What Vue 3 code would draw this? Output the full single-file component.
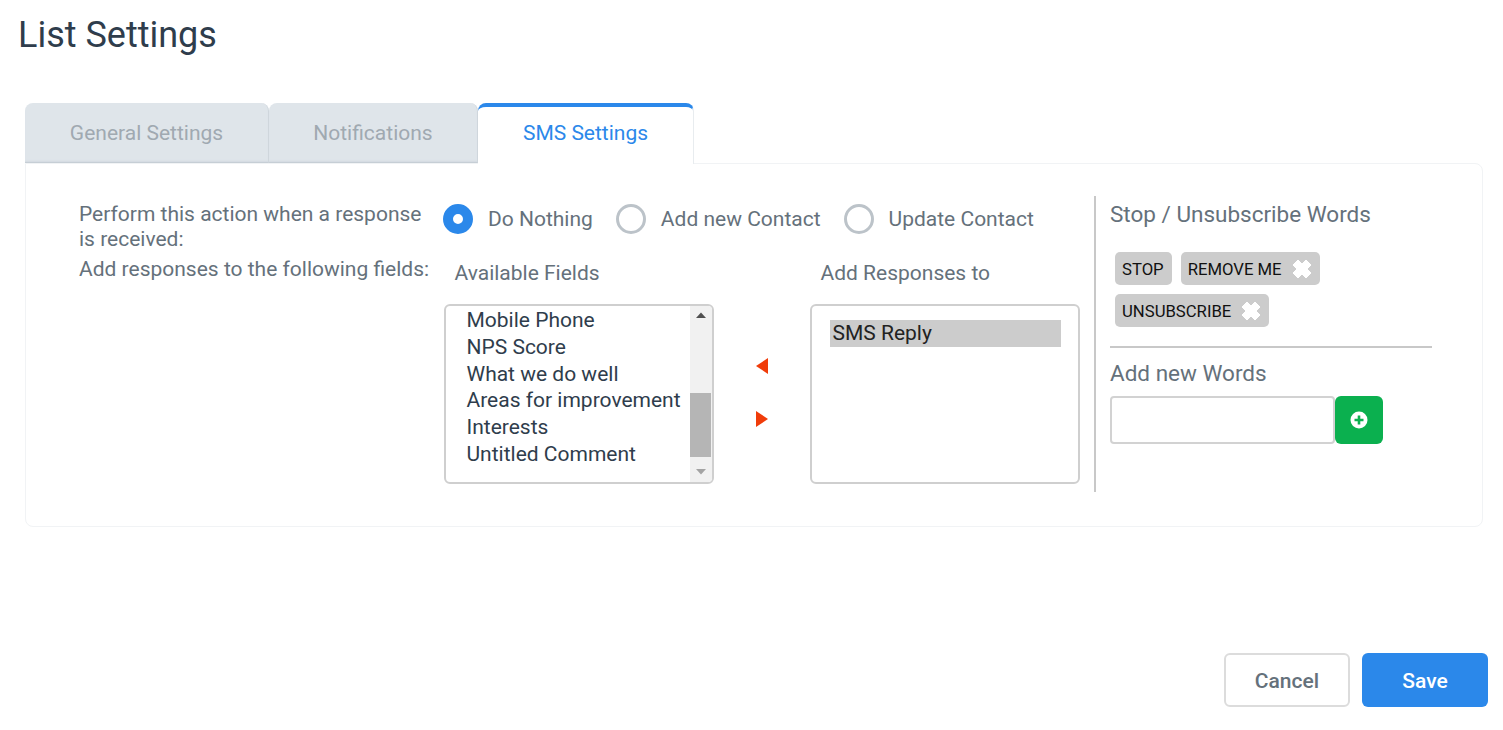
<script setup>
const tabs = [
  { label: 'General Settings', width: 244 },
  { label: 'Notifications', width: 209 },
  { label: 'SMS Settings', width: 216, active: true }
]
const radios = [
  { label: 'Do Nothing', checked: true },
  { label: 'Add new Contact' },
  { label: 'Update Contact' }
]
const fields = ['Mobile Phone', 'NPS Score', 'What we do well', 'Areas for improvement', 'Interests', 'Untitled Comment']
</script>

<template>
  <div class="page">
    <h1 class="title">List Settings</h1>
    <div class="tabs">
      <div
        v-for="t in tabs"
        :key="t.label"
        class="tab"
        :class="{ active: t.active }"
        :style="{ width: t.width + 'px' }"
      >{{ t.label }}</div>
    </div>
    <div class="card">
      <div class="main">
        <div class="labels">
          <p class="perform">Perform this action when a response<br>is received:</p>
          <p class="addresp">Add responses to the following fields:</p>
        </div>
        <div class="controls">
          <div class="radios">
            <label v-for="r in radios" :key="r.label" class="radio">
              <span class="dot" :class="{ on: r.checked }"></span>
              <span>{{ r.label }}</span>
            </label>
          </div>
          <div class="transfer">
            <div class="col">
              <div class="col-title">Available Fields</div>
              <div class="box">
                <div class="items">
                  <div v-for="f in fields" :key="f" class="item">{{ f }}</div>
                </div>
                <div class="scrollbar">
                  <svg class="sb-arrow" width="12" height="8" viewBox="0 0 12 8"><path d="M1 7L6 1.5 11 7z" fill="#505050"/></svg>
                  <div class="sb-track"><div class="sb-thumb"></div></div>
                  <svg class="sb-arrow" width="12" height="8" viewBox="0 0 12 8"><path d="M1 1L6 6.5 11 1z" fill="#a3a3a3"/></svg>
                </div>
              </div>
            </div>
            <div class="arrows">
              <svg width="14" height="18" viewBox="0 0 14 18"><path d="M13 1V17L1 9z" fill="#f03c0a"/></svg>
              <svg width="14" height="18" viewBox="0 0 14 18"><path d="M1 1V17L13 9z" fill="#f03c0a"/></svg>
            </div>
            <div class="col">
              <div class="col-title second">Add Responses to</div>
              <div class="box box2">
                <div class="selected">SMS Reply</div>
              </div>
            </div>
          </div>
        </div>
      </div>
      <div class="side">
        <div class="side-title">Stop / Unsubscribe Words</div>
        <div class="chips">
          <span class="chip">STOP</span>
          <span class="chip">REMOVE ME
            <svg class="x" width="20" height="20" viewBox="0 0 20 20"><path d="M6 1L10 5 14 1 19 6 15 10 19 14 14 19 10 15 6 19 1 14 5 10 1 6z" fill="#fff" stroke="#fff" stroke-linejoin="round"/></svg>
          </span>
          <span class="chip">UNSUBSCRIBE
            <svg class="x" width="20" height="20" viewBox="0 0 20 20"><path d="M6 1L10 5 14 1 19 6 15 10 19 14 14 19 10 15 6 19 1 14 5 10 1 6z" fill="#fff" stroke="#fff" stroke-linejoin="round"/></svg>
          </span>
        </div>
        <div class="divider"></div>
        <div class="side-sub">Add new Words</div>
        <div class="add">
          <input class="word" type="text">
          <button class="plus" type="button">
            <svg width="18" height="18" viewBox="0 0 18 18"><circle cx="9" cy="9" r="8.5" fill="#fff"/><path d="M9 4.5v9M4.5 9h9" stroke="#0bb04f" stroke-width="2.6"/></svg>
          </button>
        </div>
      </div>
    </div>
    <div class="actions">
      <button class="btn cancel" type="button">Cancel</button>
      <button class="btn save" type="button">Save</button>
    </div>
  </div>
</template>

<style>
html, body { margin: 0; background: #fff; }
</style>

<style scoped>
.page {
  box-sizing: border-box;
  height: 730px;
  width: 1503px;
  overflow: hidden;
  padding: 0 15px 23px 25px;
  display: flex;
  flex-direction: column;
  font-family: Roboto, "Liberation Sans", sans-serif;
  color: #65717b;
}
.title {
  margin: 14px 0 0 -7px;
  font-size: 36px;
  line-height: 42px;
  font-weight: 400;
  color: #2f3d4c;
}
.tabs {
  display: flex;
  margin-top: 47px;
  height: 60px;
}
.tab {
  box-sizing: border-box;
  display: flex;
  align-items: center;
  justify-content: center;
  font-size: 21px;
  color: #a0a9b1;
  background: #dfe5ea;
  border-radius: 8px 8px 0 0;
  border-right: 1px solid #cfd6dc;
  border-bottom: 1px solid #c6ced5;
  box-shadow: inset 0 -2px 2px -1px #d3dae0;
}
.tab.active {
  background: #fff;
  color: #2b88ea;
  border-top: 4px solid #2b88ea;
  border-right: 1px solid #e8ecef;
  border-bottom: 0;
  box-shadow: none;
  padding-bottom: 6px;
  margin-bottom: -1px;
  height: 61px;
  position: relative;
}
.card {
  box-sizing: border-box;
  width: 1458px;
  height: 364px;
  border: 1px solid #f1f3f5;
  border-radius: 0 8px 8px 8px;
  padding: 32px 49px 34px 53px;
  display: flex;
}
.main {
  width: 1015px;
  flex: none;
  display: flex;
}
.labels {
  width: 364px;
  flex: none;
  font-size: 21px;
  line-height: 25px;
  color: #65717b;
}
.labels p { margin: 0; }
.perform { padding-top: 6px; }
.addresp { margin-top: 5px !important; }
.controls { flex: 1; min-width: 0; }
.radios {
  display: flex;
  height: 46px;
  align-items: center;
  font-size: 21px;
}
.radio {
  display: flex;
  align-items: center;
  gap: 15px;
  margin-right: 23px;
}
.dot {
  box-sizing: border-box;
  width: 30px;
  height: 30px;
  border-radius: 50%;
  border: 3px solid #bcc3c9;
  background: #fff;
}
.dot.on {
  border: 10px solid #2b88ea;
}
.transfer {
  display: flex;
  margin-top: 18px;
  margin-left: 1px;
}
.col { width: 270px; flex: none; }
.col-title {
  font-size: 21px;
  line-height: 26px;
  padding-left: 10.5px;
  margin-bottom: 18px;
}
.box {
  box-sizing: border-box;
  height: 180px;
  border: 2px solid #cfcfcf;
  border-radius: 6px;
  display: flex;
  overflow: hidden;
  background: #fff;
}
.items {
  flex: 1;
  padding: 1px 0 0 20.5px;
  font-size: 21px;
  line-height: 26.8px;
  color: #2f3d4c;
  white-space: nowrap;
}
.scrollbar {
  width: 22px;
  background: #f1f1f1;
  display: flex;
  flex-direction: column;
  align-items: center;
  flex: none;
}
.sb-arrow { flex: none; margin: 5px 0 6px; }
.sb-track { flex: 1; width: 100%; padding-top: 68px; box-sizing: border-box; }
.sb-thumb { height: 64px; width: 21px; background: #b5b5b5; }
.arrows {
  width: 96px;
  flex: none;
  display: flex;
  flex-direction: column;
  align-items: center;
  gap: 35px;
  padding-top: 97px;
  box-sizing: border-box;
}
.box2 { padding: 14px 17px 0 18px; display: block; }
.selected {
  background: #ccc;
  height: 27px;
  line-height: 27px;
  font-size: 21px;
  padding-left: 2.5px;
  color: #222;
}
.side {
  flex: 1;
  border-left: 2px solid #c8c8c8;
  padding-left: 13px;
  margin-left: 0;
}
.side > * { margin-left: 1px; }
.side-title {
  font-size: 22.5px;
  line-height: 28px;
  margin-top: 4px;
}
.chips {
  display: flex;
  flex-wrap: wrap;
  gap: 9px;
  margin-top: 24px;
  padding-left: 5px;
}
.chip {
  display: inline-flex;
  align-items: center;
  height: 33px;
  padding: 1px 8px 0 7px;
  box-sizing: border-box;
  gap: 10px;
  background: #ccc;
  border-radius: 5px;
  font-size: 16.7px;
  color: #111;
}
.divider {
  height: 2px;
  background: #c8c8c8;
  margin-top: 19px;
  margin-right: 1px;
}
.side-sub {
  font-size: 22.5px;
  line-height: 28px;
  margin-top: 11px;
}
.add {
  display: flex;
  margin-top: 9px;
}
.word {
  box-sizing: border-box;
  width: 225px;
  height: 48px;
  border: 2px solid #d2d2d2;
  border-radius: 4px;
  background: #fff;
  padding: 0 8px;
  outline: none;
}
.plus {
  width: 48px;
  height: 48px;
  border: 0;
  padding: 0;
  border-radius: 6px;
  background: #0bb04f;
  display: flex;
  align-items: center;
  justify-content: center;
}
.actions {
  margin-top: auto;
  display: flex;
  justify-content: flex-end;
  gap: 12px;
}
.btn {
  box-sizing: border-box;
  width: 126px;
  height: 54px;
  padding-top: 2px;
  border-radius: 6px;
  font-family: Roboto, "Liberation Sans", sans-serif;
  font-size: 21px;
  font-weight: 500;
}
.cancel {
  background: #fff;
  border: 2px solid #dcdcdc;
  color: #65717b;
}
.save {
  background: #2b88ea;
  border: 0;
  color: #fff;
}
</style>
